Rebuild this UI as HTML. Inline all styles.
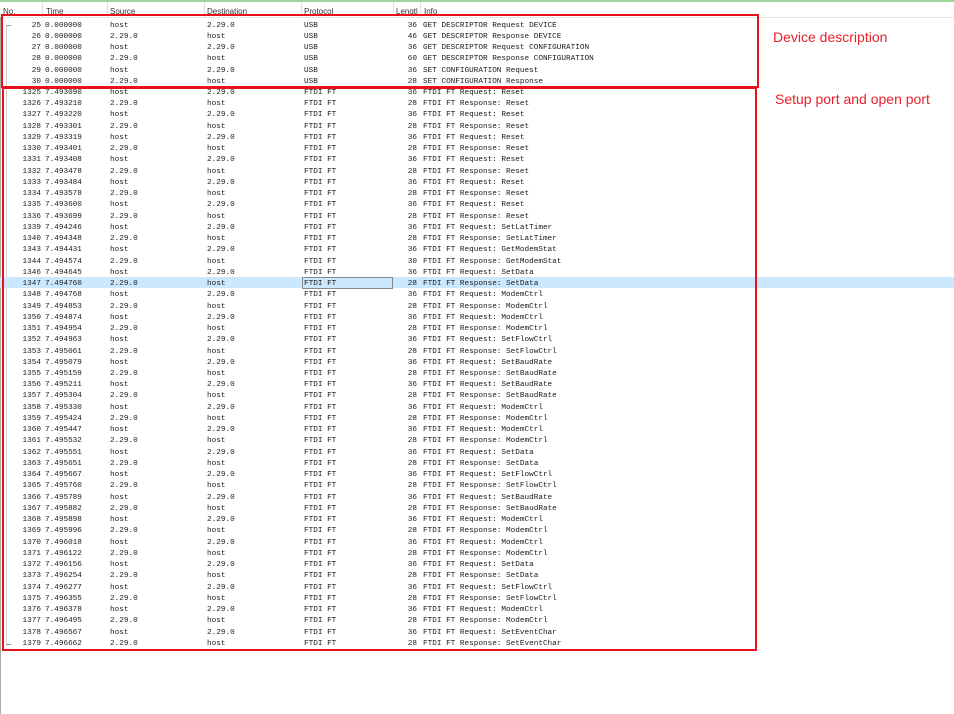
<!DOCTYPE html><html><head><style>
body{margin:0;width:954px;height:714px;overflow:hidden;background:#fff;position:relative;font-family:"Liberation Mono",monospace;font-size:7.7px;color:#1a1a1a}
.r{position:absolute;left:0;width:954px;height:11px;line-height:11px;white-space:pre}
.r span{position:absolute;top:0}
.n{right:913px;text-align:right}
.t{left:45px}.s{left:110px}.d{left:207px}.p{left:304px}.l{right:537px;text-align:right}.i{left:423px}
.h{position:absolute;top:0;left:0;width:954px;height:15px;border-top:2px solid #9fd39a;background:#fff;font-family:"Liberation Sans",sans-serif;font-size:8px;color:#333;border-bottom:1px solid #e5e5e5}
.h span{position:absolute;top:5px}
.h i{position:absolute;top:0;height:15px;border-left:1px solid #e0e0e0}
.box{position:absolute;border:2px solid #e8121f}
.a{position:absolute;font-family:"Liberation Sans",sans-serif;font-size:14px;color:#e8202a}
</style></head><body>
<div class="h"><span style="left:3px">No.</span><span style="left:46px">Time</span><span style="left:110px">Source</span><span style="left:207px">Destination</span><span style="left:304px">Protocol</span><span style="left:396px">Lengtl</span><span style="left:424px">Info</span>
<i style="left:42px"></i><i style="left:107px"></i><i style="left:204px"></i><i style="left:301px"></i><i style="left:393px"></i><i style="left:420px"></i></div>
<div style="position:absolute;left:0;top:17px;width:1px;height:697px;background:#aaa"></div>
<div style="position:absolute;left:6px;top:25px;width:1px;height:619px;background:#ccc"></div>
<div style="position:absolute;left:6px;top:25px;width:5px;height:1px;background:#999"></div>
<div style="position:absolute;left:6px;top:644px;width:5px;height:1px;background:#999"></div>
<div style="position:absolute;left:0;top:277px;width:954px;height:11px;background:#cce8ff"></div>
<div style="position:absolute;left:302px;top:277px;width:89px;height:10px;border:1px solid #888"></div>
<div id="rows"></div>
<script>
var d=[
[25,"0.000000","host","2.29.0","USB",36,"GET DESCRIPTOR Request DEVICE"],
[26,"0.000000","2.29.0","host","USB",46,"GET DESCRIPTOR Response DEVICE"],
[27,"0.000000","host","2.29.0","USB",36,"GET DESCRIPTOR Request CONFIGURATION"],
[28,"0.000000","2.29.0","host","USB",60,"GET DESCRIPTOR Response CONFIGURATION"],
[29,"0.000000","host","2.29.0","USB",36,"SET CONFIGURATION Request"],
[30,"0.000000","2.29.0","host","USB",28,"SET CONFIGURATION Response"]];
var f=[[1325,"7.493090","Request: Reset"],[1326,"7.493210","Response: Reset"],[1327,"7.493220","Request: Reset"],[1328,"7.493301","Response: Reset"],[1329,"7.493319","Request: Reset"],[1330,"7.493401","Response: Reset"],[1331,"7.493408","Request: Reset"],[1332,"7.493478","Response: Reset"],[1333,"7.493484","Request: Reset"],[1334,"7.493578","Response: Reset"],[1335,"7.493600","Request: Reset"],[1336,"7.493699","Response: Reset"],[1339,"7.494246","Request: SetLatTimer"],[1340,"7.494348","Response: SetLatTimer"],[1343,"7.494431","Request: GetModemStat"],[1344,"7.494574","Response: GetModemStat",30],[1346,"7.494645","Request: SetData"],[1347,"7.494760","Response: SetData"],[1348,"7.494768","Request: ModemCtrl"],[1349,"7.494853","Response: ModemCtrl"],[1350,"7.494874","Request: ModemCtrl"],[1351,"7.494954","Response: ModemCtrl"],[1352,"7.494963","Request: SetFlowCtrl"],[1353,"7.495061","Response: SetFlowCtrl"],[1354,"7.495079","Request: SetBaudRate"],[1355,"7.495159","Response: SetBaudRate"],[1356,"7.495211","Request: SetBaudRate"],[1357,"7.495304","Response: SetBaudRate"],[1358,"7.495330","Request: ModemCtrl"],[1359,"7.495424","Response: ModemCtrl"],[1360,"7.495447","Request: ModemCtrl"],[1361,"7.495532","Response: ModemCtrl"],[1362,"7.495551","Request: SetData"],[1363,"7.495651","Response: SetData"],[1364,"7.495667","Request: SetFlowCtrl"],[1365,"7.495760","Response: SetFlowCtrl"],[1366,"7.495789","Request: SetBaudRate"],[1367,"7.495882","Response: SetBaudRate"],[1368,"7.495898","Request: ModemCtrl"],[1369,"7.495996","Response: ModemCtrl"],[1370,"7.496018","Request: ModemCtrl"],[1371,"7.496122","Response: ModemCtrl"],[1372,"7.496156","Request: SetData"],[1373,"7.496254","Response: SetData"],[1374,"7.496277","Request: SetFlowCtrl"],[1375,"7.496355","Response: SetFlowCtrl"],[1376,"7.496378","Request: ModemCtrl"],[1377,"7.496495","Response: ModemCtrl"],[1378,"7.496567","Request: SetEventChar"],[1379,"7.496662","Response: SetEventChar"]];
f.forEach(function(x){var q=x[2].indexOf("Request")==0;d.push([x[0],x[1],q?"host":"2.29.0",q?"2.29.0":"host","FTDI FT",x[3]||(q?36:28),"FTDI FT "+x[2]]);});
var h="";d.forEach(function(r,i){var y=20.5+i*11.24;h+='<div class="r" style="top:'+y.toFixed(1)+'px"><span class="n">'+r[0]+'</span><span class="t">'+r[1]+'</span><span class="s">'+r[2]+'</span><span class="d">'+r[3]+'</span><span class="p">'+r[4]+'</span><span class="l">'+r[5]+'</span><span class="i">'+r[6]+'</span></div>';});
document.getElementById("rows").innerHTML=h;
</script>
<div class="box" style="left:1px;top:14px;width:754px;height:70px"></div>
<div class="box" style="left:2px;top:87px;width:751px;height:560px"></div>
<div class="a" style="left:773px;top:29px">Device description</div>
<div class="a" style="left:775px;top:91px">Setup port and open port</div>
</body></html>
